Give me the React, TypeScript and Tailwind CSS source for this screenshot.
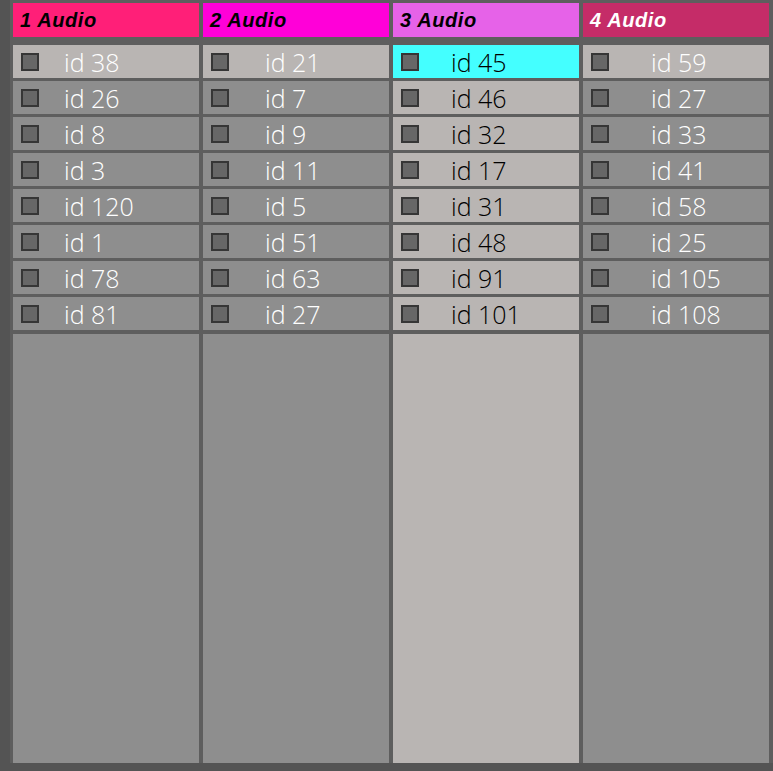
import React from "react";

type Col = {
  name: string;
  headerBg: string;
  headerText: string;
  ids: number[];
  textGap: string;
  light: boolean;
};

const cols: Col[] = [
  { name: "1 Audio", headerBg: "bg-[#ff1f78]", headerText: "text-black", ids: [38, 26, 8, 3, 120, 1, 78, 81], textGap: "ml-[25px]", light: false },
  { name: "2 Audio", headerBg: "bg-[#ff00d8]", headerText: "text-black", ids: [21, 7, 9, 11, 5, 51, 63, 27], textGap: "ml-[36px]", light: false },
  { name: "3 Audio", headerBg: "bg-[#e662e8]", headerText: "text-black", ids: [45, 46, 32, 17, 31, 48, 91, 101], textGap: "ml-[32px]", light: true },
  { name: "4 Audio", headerBg: "bg-[#c52c68]", headerText: "text-white", ids: [59, 27, 33, 41, 58, 25, 105, 108], textGap: "ml-[42px]", light: false },
];

export default function App() {
  return (
    <div className="w-[773px] h-[771px] bg-[#5e5e5e] flex flex-col overflow-hidden">
      <div className="flex flex-1 min-h-0">
        <div className="w-[10px] bg-[#545454]" />
        <div className="flex gap-[4px] pl-[3px] pt-[3px] pr-[4px] flex-1">
          {cols.map((c, ci) => (
            <div key={ci} className="w-[186px] flex flex-col">
              <div className={`h-[34px] ${c.headerBg} ${c.headerText} flex items-center pl-[7px] font-bold italic text-[20px] tracking-[0.6px]`} style={{ fontFamily: '"Liberation Sans", Arial, sans-serif' }}>
                {c.name}
              </div>
              <div className="mt-[8px] flex flex-col gap-[3px]">
                {c.ids.map((id, ri) => {
                  let bg = "bg-[#8e8e8e]";
                  let tc = "text-white";
                  if (c.light) {
                    bg = ri === 0 ? "bg-[#44ffff]" : "bg-[#b9b5b3]";
                    tc = "text-black";
                  } else if (ri === 0) {
                    bg = "bg-[#b9b5b3]";
                  }
                  return (
                    <div key={ri} className={`h-[33px] ${bg} flex items-center`}>
                      <div className="ml-[8px] w-[18px] h-[18px] border-2 border-[#363636] bg-[#676767] shrink-0" />
                      <span className={`${c.textGap} ${tc} text-[25px] leading-none font-[350] pt-[2px]`} style={{ fontFamily: '"Open Sans", "Noto Sans", sans-serif' }}>
                        id {id}
                      </span>
                    </div>
                  );
                })}
              </div>
              <div className={`mt-[4px] flex-1 ${c.light ? "bg-[#b9b5b3]" : "bg-[#8e8e8e]"}`} />
            </div>
          ))}
        </div>
      </div>
      <div className="h-[8px] bg-[#545454]" />
    </div>
  );
}
